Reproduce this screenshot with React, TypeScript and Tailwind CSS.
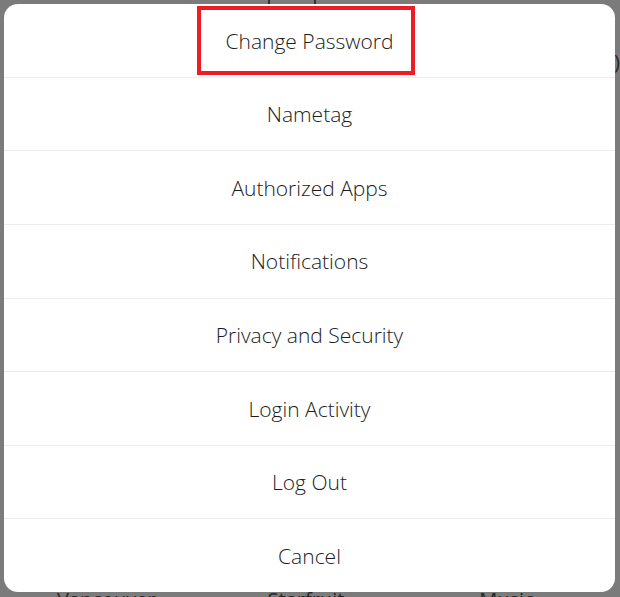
const items = [
  "Change Password",
  "Nametag",
  "Authorized Apps",
  "Notifications",
  "Privacy and Security",
  "Login Activity",
  "Log Out",
  "Cancel",
];

export default function App() {
  return (
    <div
      className="relative w-[620px] h-[597px] overflow-hidden bg-[#7b7b7b] pl-[4px] pr-[5px] pt-[4px] pb-[5px]"
      style={{ fontFamily: '"Open Sans", "Noto Sans", sans-serif' }}
    >
      {/* page behind the dimmed overlay, only slivers show */}
      <div className="absolute inset-0 text-[20px] text-[#262626]">
        <div className="absolute left-[268px] top-0 w-[2px] h-[5px] bg-[#333]" />
        <div className="absolute left-[314px] top-0 w-[2px] h-[4px] bg-[#333]" />
        <span className="absolute left-[614px] top-[52px] leading-none">)</span>
        <div className="absolute left-0 right-0 top-[590px] flex leading-none">
          <span className="ml-[57px]">Vancouver</span>
          <span className="ml-[112px]">Starfruit</span>
          <span className="ml-[135px]">Music</span>
        </div>
      </div>

      {/* action sheet */}
      <div className="relative h-full bg-white rounded-[14px] flex flex-col overflow-hidden">
        {items.map((label, i) => (
          <div
            key={label}
            className={
              "flex-1 flex items-center justify-center pt-[2px] text-[21px] font-light text-[#1c1c1c]" +
              (i < items.length - 1 ? " border-b border-[#ececec]" : "")
            }
          >
            {label}
          </div>
        ))}
        {/* highlight annotation */}
        <div className="absolute left-[193px] top-[2px] w-[218px] h-[69px] border-4 border-[#ee1c25]" />
      </div>
    </div>
  );
}
